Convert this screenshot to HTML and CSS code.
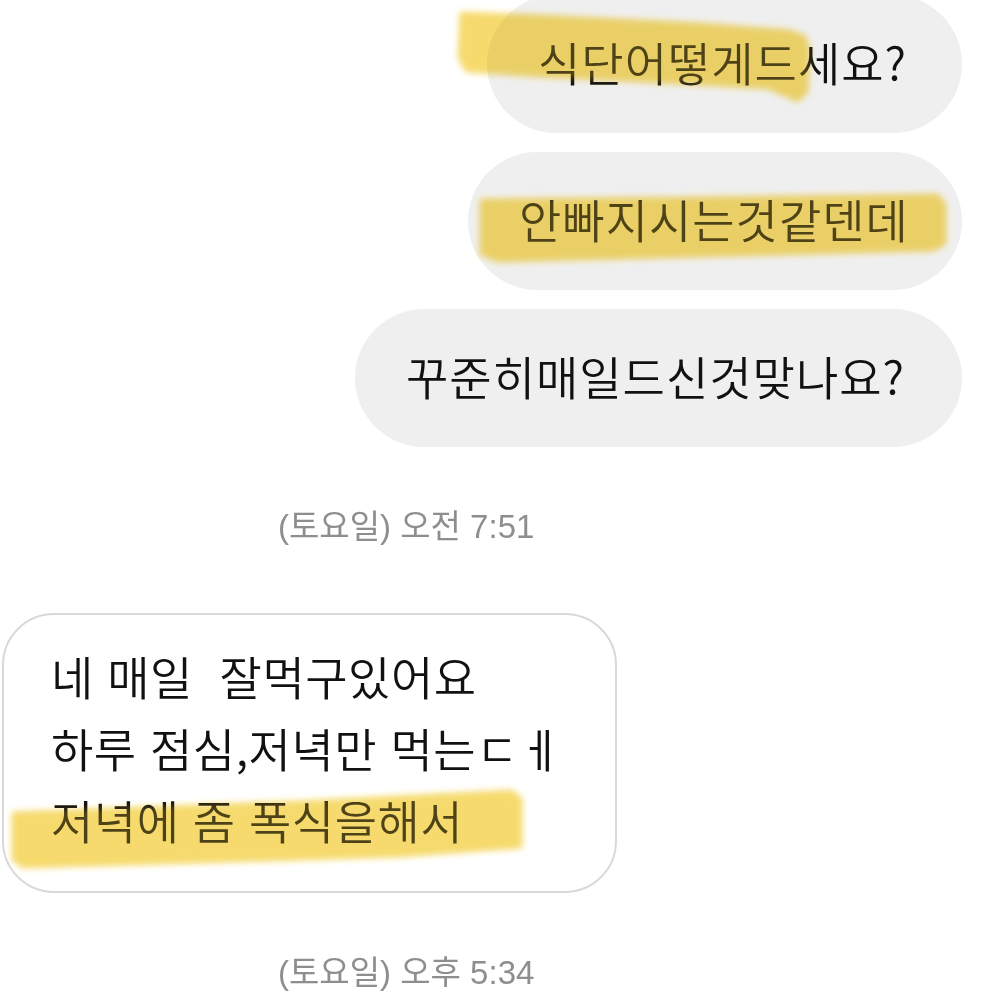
FILE: index.html
```html
<!DOCTYPE html>
<html lang="ko">
<head>
  <meta charset="UTF-8">
  <meta name="viewport" content="width=device-width, initial-scale=1">
  <link rel="stylesheet" href="styles.css">
</head>
<body>

<!-- Conversation -->
<div class="thread">
  <div class="row out first">
    <div class="bubble grey b1">식단어떻게드세요?</div>
  </div>
  <div class="row out">
    <div class="bubble grey b2">안빠지시는것같덴데</div>
  </div>
  <div class="row out">
    <div class="bubble grey b3">꾸준히매일드신것맞나요?</div>
  </div>

  <div class="stamp stamp-am">(토요일) 오전 7:51</div>

  <div class="row in">
    <div class="bubble white">
      <p class="line">네 매일&nbsp; 잘먹구있어요</p>
      <p class="line">하루 점심,저녁만 먹는ㄷㅔ</p>
      <p class="line">저녁에 좀 폭식을해서</p>
    </div>
  </div>

  <div class="stamp stamp-pm">(토요일) 오후 5:34</div>

  <!-- highlighter strokes drawn over the messages -->
  <svg class="marker multiply" width="1000" height="1000" viewBox="0 0 1000 1000">
    <defs>
      <filter id="soft" x="-10%" y="-50%" width="120%" height="200%">
        <feGaussianBlur stdDeviation="3"/>
      </filter>
      <g id="strokes">
        <path d="M460,12 L540,15 L700,23 L790,30 L806,36 L810,50 L808,92 L798,102 L786,97 L768,89 L660,83 L540,77 L466,72 L458,58 Z"/>
        <path d="M480,199 L700,197 L938,194 L946,204 L946,244 L934,251 L700,257 L498,262 L480,255 Z"/>
        <path d="M12,812 L300,801 L512,790 L522,798 L522,848 L400,857 L200,863 L22,868 L12,860 Z"/>
      </g>
    </defs>
    <use href="#strokes" fill="rgb(249,226,128)" filter="url(#soft)"/>
  </svg>
  <svg class="marker" width="1000" height="1000" viewBox="0 0 1000 1000">
    <use href="#strokes" fill="rgb(236,196,60)" fill-opacity="0.28" filter="url(#soft)"/>
  </svg>
</div>

</body>
</html>
```

FILE: styles.css
```css
body {
  margin: 0;
  background: #fff;
  font-family: "Noto Sans CJK KR", "Noto Sans", sans-serif;
  color: #111;
  overflow: hidden;
}

* {
  box-sizing: border-box;
}

.thread {
  position: relative;
  width: 1000px;
  height: 1000px;
  display: flex;
  flex-direction: column;
}

.row {
  display: flex;
}

.row.out {
  justify-content: flex-end;
  padding-right: 38px;
  margin-bottom: 19px;
}

.row.out.first {
  margin-top: -5px;
}

.row.in {
  padding-left: 2px;
}

.bubble {
  font-size: 46px;
  font-weight: 350;
  line-height: 1;
  letter-spacing: 1px;
}

.bubble.grey {
  height: 138px;
  display: flex;
  align-items: center;
  padding: 0 40px 6px 51px;
  background: #efefef;
  border-radius: 69px;
}

.b1 {
  width: 475px;
}

.b2 {
  width: 494px;
}

.b3 {
  width: 607px;
}

.stamp {
  font-family: "Liberation Sans", "Noto Sans CJK KR", sans-serif;
  font-size: 33px;
  color: #8e8e8e;
  padding-left: 278px;
  line-height: 40px;
}

.stamp-am {
  margin-top: 41px;
  margin-bottom: 66px;
}

.stamp-pm {
  margin-top: 60px;
}

.bubble.white {
  width: 615px;
  height: 280px;
  background: #fff;
  border: 2px solid #d9d9d9;
  border-radius: 52px;
  padding: 24px 20px 0 47px;
  letter-spacing: 0.5px;
}

.line {
  margin: 0;
  height: 72px;
  line-height: 72px;
  white-space: pre;
}

/* Highlighter */
.marker {
  position: absolute;
  left: 0;
  top: 0;
  pointer-events: none;
}

.marker.multiply {
  mix-blend-mode: multiply;
}
```
